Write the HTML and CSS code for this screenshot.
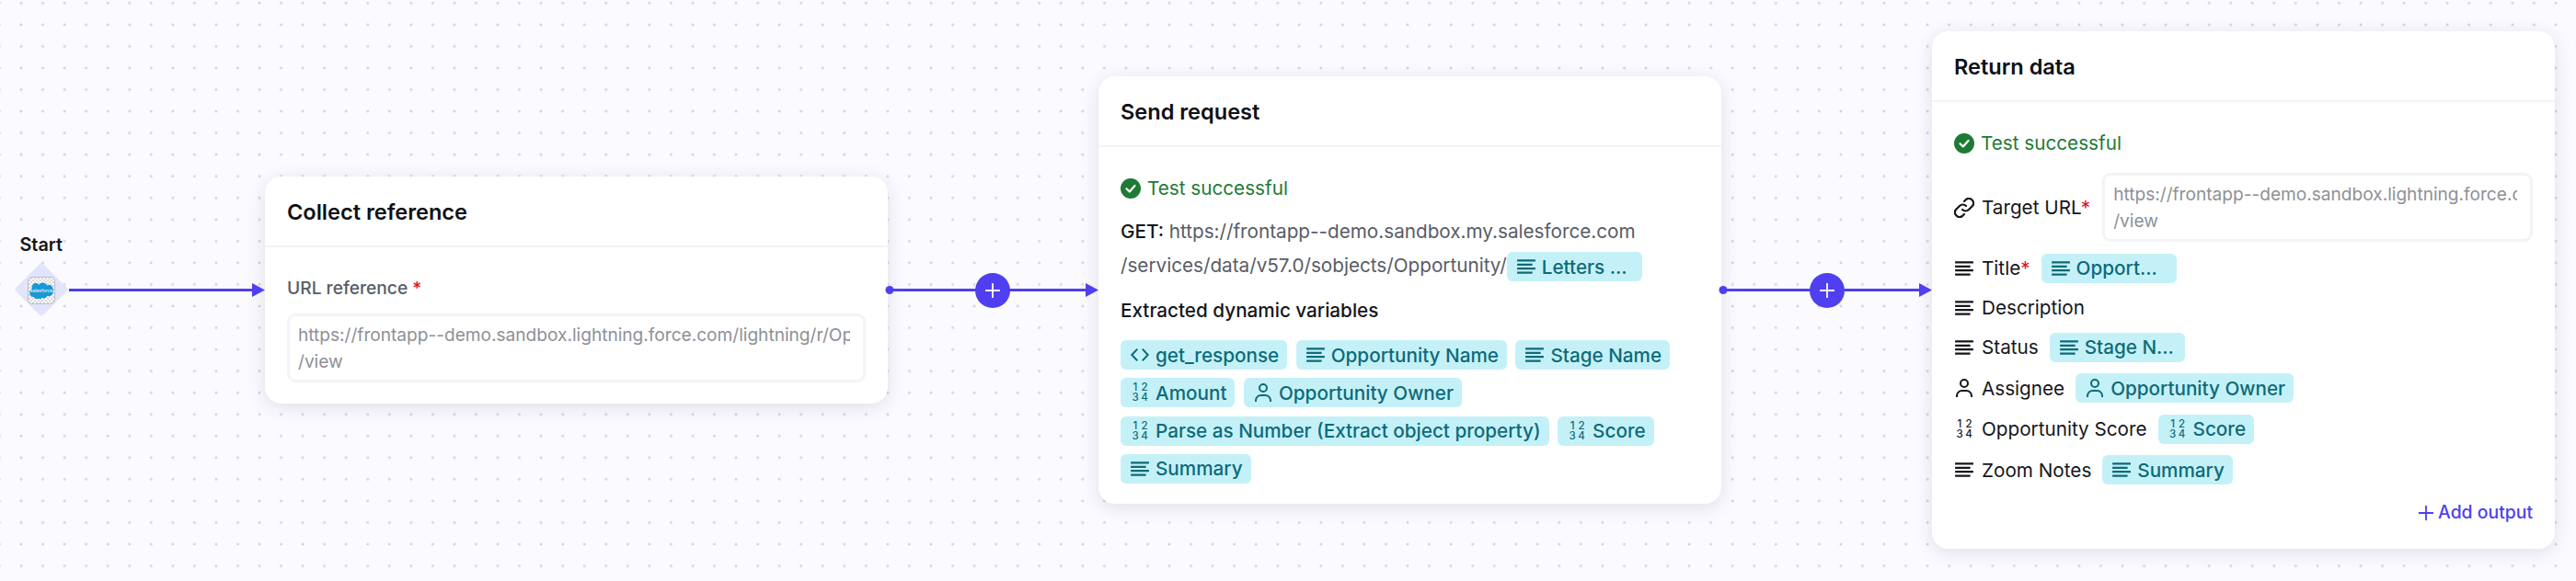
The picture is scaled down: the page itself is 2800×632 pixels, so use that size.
FILE: index.html
```
<!DOCTYPE html>
<html lang="en">
<head>
    <meta charset="UTF-8">
    <title>Workflow canvas</title>
    <link rel="stylesheet" href="styles.css">
</head>
<body>
    <svg class="sprites" width="0" height="0">
        <symbol id="i-lines" viewBox="0 0 20 16">
            <path d="M1 2h18M1 6h15M1 10h18M1 14h15" fill="none" stroke="currentColor" stroke-width="2"/>
        </symbol>
        <symbol id="i-code" viewBox="0 0 24 20">
            <path d="M9 3 2.500 10 9 17M15 3l6.500 7L15 17" fill="none" stroke="currentColor" stroke-width="2.200"/>
        </symbol>
        <symbol id="i-user" viewBox="0 0 22 20">
            <circle cx="11" cy="5" r="4" fill="none" stroke="currentColor" stroke-width="2"/>
            <path d="M3 20v-1.500c0-3 2.500-5.500 5.500-5.500h5c3 0 5.500 2.500 5.500 5.500V20" fill="none" stroke="currentColor" stroke-width="2"/>
        </symbol>
        <symbol id="i-link" viewBox="1 1 22 22">
            <path d="M10 14a5 5 0 0 0 7 0l4-4a5 5 0 0 0-7-7l-2 2M14 10a5 5 0 0 0-7 0l-4 4a5 5 0 0 0 7 7l2-2" fill="none" stroke="currentColor" stroke-width="2.200" stroke-linecap="round"/>
        </symbol>
        <symbol id="i-check" viewBox="0 0 22 22">
            <circle cx="11" cy="11" r="11" fill="currentColor"/>
            <path d="M6.500 11.300 9.800 14.500 15.500 8" fill="none" stroke="#fff" stroke-width="2.200" stroke-linecap="round" stroke-linejoin="round"/>
        </symbol>
    </svg>

    <div class="canvas">
        <svg class="edges" width="2800" height="632">
            <path d="M75 315.500H276M966 315.500H1182M1872 315.500H2088" stroke="#4f3ff0" stroke-width="3" fill="none"/>
            <path d="M274 308 288 315.500 274 323ZM1180 308 1194 315.500 1180 323ZM2086 308 2100 315.500 2086 323Z" fill="#4f3ff0"/>
            <circle cx="967" cy="315.500" r="4.500" fill="#4f3ff0"/>
            <circle cx="1873" cy="315.500" r="4.500" fill="#4f3ff0"/>
        </svg>

        <div class="start-node">
            <div class="start-label">Start</div>
            <div class="diamond"></div>
            <div class="app-icon">
                <svg width="26" height="18" viewBox="0 0 26 18">
                    <path d="M10.500 2.500C11.600 1.300 13 .6 14.600 .6c2 0 3.800 1.100 4.700 2.800.8-.4 1.700-.6 2.600-.6 0 0 4 .8 4 6.200s-3.400 6.200-5.300 6.200c-.4 0-.8 0-1.200-.1-.8 1.400-2.300 2.300-4 2.300-.7 0-1.400-.2-2-.5-.8 1.800-2.600 3-4.600 2.500-2-.3-3-1.500-3.400-3C3.500 16.500.2 14.500.2 11.700c0-1.800 1-3.400 2.400-4.200C2 3.500 4.500.8 7 1c1.400 0 2.600.6 3.500 1.500Z" fill="#1798d8"/>
                    <text x="13" y="10.500" class="sf-word">salesforce</text>
                </svg>
            </div>
        </div>

        <div class="card card-collect">
            <div class="card-head">Collect reference</div>
            <div class="card-body">
                <div class="url-label">URL reference <span class="req">*</span></div>
                <div class="url-box">
                    <div class="url-line">https://frontapp--demo.sandbox.lightning.force.com/lightning/r/Opportunity</div>
                    <div class="url-line">/view</div>
                </div>
            </div>
        </div>

        <button class="add-btn add-one"><svg width="18" height="18" viewBox="0 0 18 18"><path d="M9 1v16M1 9h16" stroke="#fff" stroke-width="1.800"/></svg></button>

        <div class="card card-request">
            <div class="card-head">Send request</div>
            <div class="card-body">
                <div class="test-ok"><svg class="check"><use href="#i-check"/></svg>Test successful</div>
                <p class="request-line"><b>GET:</b> https://frontapp--demo.sandbox.my.salesforce.com<br>/services/data/v57.0/sobjects/Opportunity/<span class="chip chip-cut"><svg class="ico"><use href="#i-lines"/></svg>Letters ...</span></p>
                <div class="vars-title">Extracted dynamic variables</div>
                <div class="chips">
                    <span class="chip"><svg class="ico"><use href="#i-code"/></svg>get_response</span>
                    <span class="chip"><svg class="ico"><use href="#i-lines"/></svg>Opportunity Name</span>
                    <span class="chip"><svg class="ico"><use href="#i-lines"/></svg>Stage Name</span>
                    <span class="chip"><span class="ico num-ico"><span>1</span><span>2</span><span>3</span><span>4</span></span>Amount</span>
                    <span class="chip"><svg class="ico"><use href="#i-user"/></svg>Opportunity Owner</span>
                    <span class="chip"><span class="ico num-ico"><span>1</span><span>2</span><span>3</span><span>4</span></span>Parse as Number (Extract object property)</span>
                    <span class="chip"><span class="ico num-ico"><span>1</span><span>2</span><span>3</span><span>4</span></span>Score</span>
                    <span class="chip"><svg class="ico"><use href="#i-lines"/></svg>Summary</span>
                </div>
            </div>
        </div>

        <button class="add-btn add-two"><svg width="18" height="18" viewBox="0 0 18 18"><path d="M9 1v16M1 9h16" stroke="#fff" stroke-width="1.800"/></svg></button>

        <div class="card card-return">
            <div class="card-head">Return data</div>
            <div class="card-body">
                <div class="test-ok"><svg class="check"><use href="#i-check"/></svg>Test successful</div>
                <div class="fields">
                    <div class="field">
                        <svg class="ico ico-link"><use href="#i-link"/></svg><span>Target URL<span class="req">*</span></span>
                        <div class="url-box url-grow">
                            <div class="url-line">https://frontapp--demo.sandbox.lightning.force.com/lightning/r/Opportunity</div>
                            <div class="url-line">/view</div>
                        </div>
                    </div>
                    <div class="field">
                        <svg class="ico"><use href="#i-lines"/></svg><span>Title<span class="req">*</span></span>
                        <span class="chip chip-cut"><svg class="ico"><use href="#i-lines"/></svg>Opport...</span>
                    </div>
                    <div class="field">
                        <svg class="ico"><use href="#i-lines"/></svg><span>Description</span>
                    </div>
                    <div class="field">
                        <svg class="ico"><use href="#i-lines"/></svg><span>Status</span>
                        <span class="chip chip-cut"><svg class="ico"><use href="#i-lines"/></svg>Stage N...</span>
                    </div>
                    <div class="field">
                        <svg class="ico"><use href="#i-user"/></svg><span>Assignee</span>
                        <span class="chip"><svg class="ico"><use href="#i-user"/></svg>Opportunity Owner</span>
                    </div>
                    <div class="field">
                        <span class="ico num-ico"><span>1</span><span>2</span><span>3</span><span>4</span></span><span>Opportunity Score</span>
                        <span class="chip"><span class="ico num-ico"><span>1</span><span>2</span><span>3</span><span>4</span></span>Score</span>
                    </div>
                    <div class="field">
                        <svg class="ico"><use href="#i-lines"/></svg><span>Zoom Notes</span>
                        <span class="chip"><svg class="ico"><use href="#i-lines"/></svg>Summary</span>
                    </div>
                </div>
                <div class="add-output"><svg width="16" height="16" viewBox="0 0 16 16"><path d="M8 0v16M0 8h16" stroke="currentColor" stroke-width="1.800"/></svg>Add output</div>
            </div>
        </div>
    </div>
</body>
</html>
```

FILE: styles.css
```
* {
    box-sizing: border-box;
}
body {
    margin: 0;
    font-family: 'Inter', sans-serif;
    font-size: 20.700px;
    line-height: 29px;
    color: #15161b;
    background: #fbfaff;
    overflow: hidden;
}
.sprites {
    position: absolute;
}
.sf-word {
    font-family: 'Inter', sans-serif;
    font-size: 5px;
    fill: #fff;
    text-anchor: middle;
}
.canvas {
    position: relative;
    width: 2800px;
    height: 632px;
    overflow: hidden;
    background-image: radial-gradient(circle, #d2d2d9 1.2px, transparent 1.7px);
    background-size: 23.56px 23.56px;
    background-position: 11.22px -8.44px;
}
.edges {
    position: absolute;
    left: 0;
    top: 0;
    z-index: 1;
}

/* start trigger */
.start-node {
    position: absolute;
    left: 15px;
    top: 250px;
    width: 60px;
    height: 95px;
}
.start-label {
    position: absolute;
    left: 6.500px;
    top: 2px;
    font-size: 19.800px;
    font-weight: 600;
    white-space: nowrap;
}
.diamond {
    position: absolute;
    left: 9px;
    top: 44px;
    width: 42px;
    height: 42px;
    background: #e1e4fb;
    border-radius: 3px;
    transform: rotate(45deg);
}
.app-icon {
    position: absolute;
    left: 15px;
    top: 50.500px;
    width: 30px;
    height: 30px;
    display: flex;
    align-items: center;
    justify-content: center;
    border: 1px solid #bdbdc4;
    border-radius: 5px;
    background: repeating-conic-gradient(#d9d9dc 0 25%, #fff 0 50%) 0 0 / 4px 4px;
}

/* node cards */
.card {
    position: absolute;
    width: 677px;
    background: #fff;
    border-radius: 18px;
    box-shadow: 0 4px 20px rgba(30, 30, 70, 0.12);
}
.card-collect {
    left: 288px;
    top: 192px;
    height: 247px;
}
.card-request {
    left: 1194px;
    top: 83px;
    height: 465px;
}
.card-return {
    left: 2100px;
    top: 34px;
    height: 563px;
}
.card-head {
    height: 77px;
    padding: 1px 24px 0;
    display: flex;
    align-items: center;
    font-size: 23.560px;
    font-weight: 600;
    color: #0f1015;
    border-bottom: 2px solid #f3f3f7;
}
.card-body {
    padding: 30px 24px 0;
}
.req {
    color: #e0101e;
}
.url-label {
    font-size: 19.200px;
    font-weight: 500;
    color: #585c66;
}
.url-box {
    height: 75px;
    margin-top: 13px;
    padding: 6px 14px 0 9px;
    border: 3px solid #f3f3f8;
    border-radius: 9px;
    font-size: 19.100px;
    color: #8e9096;
}
.url-line {
    white-space: nowrap;
    overflow: hidden;
}
.test-ok {
    display: flex;
    align-items: center;
    gap: 7px;
    color: #1f7a35;
}
.check {
    width: 22px;
    height: 22px;
    color: #1f7a35;
}
.request-line {
    margin: 14px 0 0;
    line-height: 37px;
    color: #585c66;
}
.request-line b {
    font-weight: 500;
    color: #15161b;
}
.vars-title {
    margin-top: 16px;
    font-weight: 500;
}
.chips {
    display: flex;
    flex-wrap: wrap;
    gap: 9.300px 9.500px;
    margin-top: 18px;
}
.chip {
    display: inline-flex;
    align-items: center;
    gap: 6px;
    height: 32px;
    padding: 0 9px 0 10px;
    background: #c4f1f8;
    border-radius: 6px;
    color: #0e6a78;
    font-weight: 500;
    white-space: nowrap;
}
.chip-cut {
    width: 147px;
    overflow: hidden;
}
.request-line .chip {
    vertical-align: middle;
    line-height: 29px;
}
.ico {
    flex: none;
    width: 22px;
    height: 20px;
}
.ico-link {
    height: 22px;
}
.num-ico {
    display: grid;
    grid-template-columns: 10px 10px;
    justify-content: center;
    align-content: center;
    height: 22px;
    font-size: 11.500px;
    font-weight: 500;
    line-height: 11px;
    text-align: center;
}
.fields {
    display: flex;
    flex-direction: column;
    gap: 12.500px;
    margin-top: 18px;
}
.field {
    display: flex;
    align-items: center;
    gap: 8px;
    min-height: 29px;
}
.field > .chip {
    margin-left: 4px;
}
.url-grow {
    flex: 1;
    min-width: 0;
    margin: 0 0 0 5px;
}
.add-output {
    display: flex;
    align-items: center;
    justify-content: flex-end;
    gap: 5px;
    margin-top: 16px;
    font-size: 19.400px;
    font-weight: 500;
    color: #4f3ff0;
}
.add-btn {
    position: absolute;
    top: 296.500px;
    z-index: 2;
    width: 38px;
    height: 38px;
    padding: 0;
    display: flex;
    align-items: center;
    justify-content: center;
    border: none;
    border-radius: 50%;
    background: #4f3ff0;
}
.add-one {
    left: 1060px;
}
.add-two {
    left: 1967px;
}
```
